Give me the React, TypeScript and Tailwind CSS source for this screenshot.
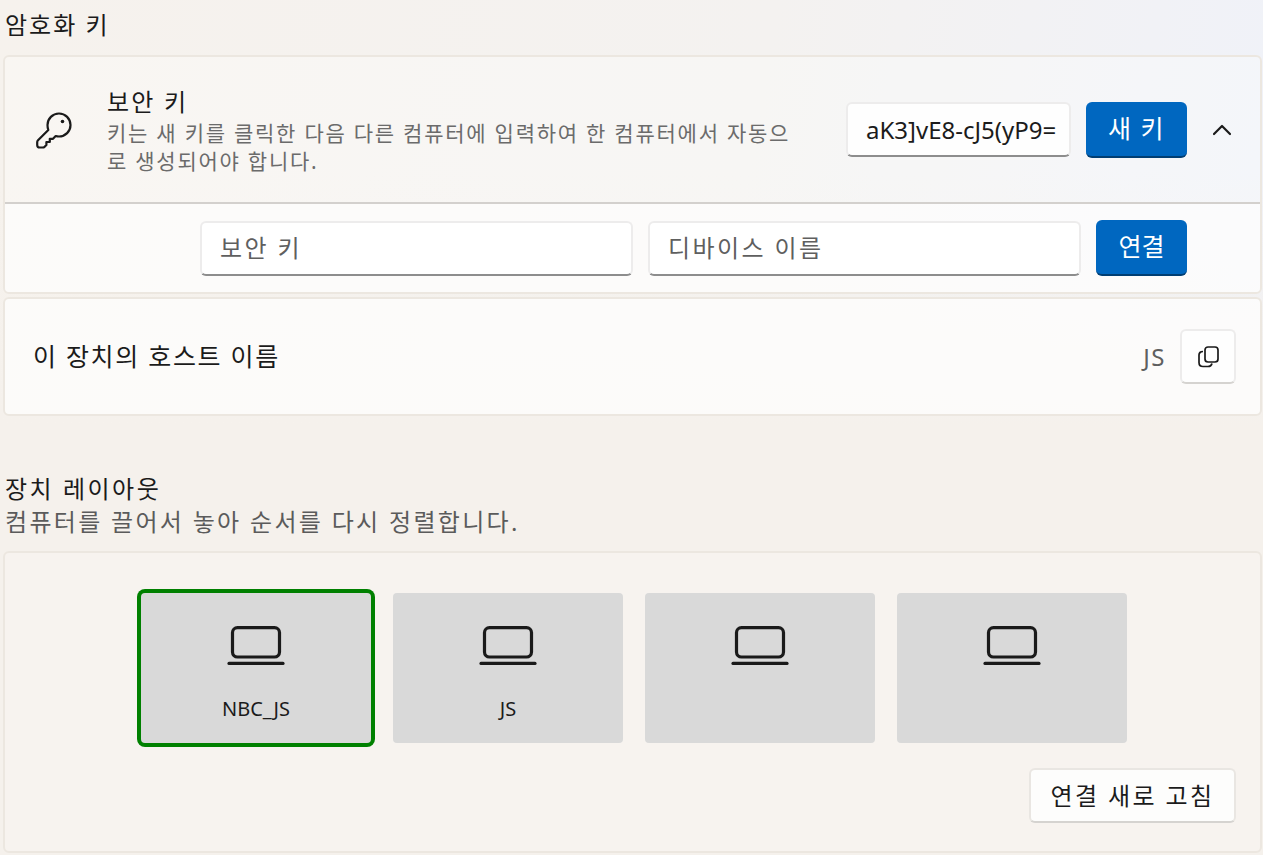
import React from "react";

const KeyIcon = () => (
  <svg width="38" height="38" viewBox="0 0 38 38" fill="none" stroke="#1a1a1a" strokeWidth="2.2" strokeLinejoin="round" strokeLinecap="round">
    <path d="M24 2.5a11.5 11.5 0 0 1 0 23c-1.400 0-2.400-.2-3.300-.5L18 27.800h-3.200v3.200h-3.400v3L9.600 35.800c-.6.5-1.200.7-2 .7H4.800c-1.500 0-2.600-1.100-2.600-2.600v-2.600c0-.8.3-1.500.8-2L13.300 18.900c-.5-1.200-.8-2.500-.8-4.900A11.500 11.500 0 0 1 24 2.500Z" />
    <circle cx="27.500" cy="10.500" r="1.800" fill="#1a1a1a" stroke="none" />
  </svg>
);

const LaptopIcon = () => (
  <svg width="58" height="40" viewBox="0 0 58 40" fill="none" stroke="#1a1a1a" strokeWidth="3.2" strokeLinecap="round">
    <rect x="5.500" y="1.600" width="47" height="29.400" rx="5" />
    <path d="M2 37.400h54" />
  </svg>
);

const CopyIcon = () => (
  <svg width="24" height="24" viewBox="0 0 24 24" fill="none" stroke="#1a1a1a" strokeWidth="1.700">
    <rect x="9" y="2" width="13" height="15" rx="3" />
    <path d="M7 6.500c-2.500 0-4 1.500-4 3.500v7.500c0 2.500 1.500 4 4 4h5c2 0 3.500-1 4-3" />
  </svg>
);

const Chevron = () => (
  <svg width="20" height="12" viewBox="0 0 20 12" fill="none" stroke="#1a1a1a" strokeWidth="2.200" strokeLinecap="round" strokeLinejoin="round">
    <path d="M2 10l8-8 8 8" />
  </svg>
);

const devices = ["NBC_JS", "JS", "", ""];

export default function App() {
  return (
    <div className="h-[855px] w-[1263px] overflow-hidden bg-[linear-gradient(100deg,#f6f2ed_0%,#f4f2f0_55%,#eff2fa_100%)] font-['Noto_Sans','Noto_Sans_CJK_KR',sans-serif] text-[#1b1b1b]">
      <div className="bg-[linear-gradient(180deg,transparent_0%,transparent_20%,#f5f1ec_50%)] h-full pl-[3px] pr-[1px]">
        <h2 className="pl-[2px] pt-[8px] text-[24px] leading-[34px] h-[55px] tracking-[2px]">암호화 키</h2>

        <div className="h-[239px] rounded-[6px] border-2 border-[#ece7e0] overflow-hidden flex flex-col">
          <div className="h-[147px] bg-white/30 border-b-2 border-[#d3d0cd] flex items-center pl-[30px] pr-[26px]">
            <KeyIcon />
            <div className="ml-[34px] w-[700px] whitespace-nowrap">
              <div className="text-[24px] leading-[34px] tracking-[2.200px]">보안 키</div>
              <div className="text-[21px] leading-[28px] tracking-[1.750px] text-[#6b6b6b]">
                키는 새 키를 클릭한 다음 다른 컴퓨터에 입력하여 한 컴퓨터에서 자동으
                <br />
                로 생성되어야 합니다.
              </div>
            </div>
            <div className="ml-[39px] flex items-center">
              <div className="w-[225px] h-[55px] bg-white/90 rounded-[6px] border-2 border-[#edecec] border-b-[#8d8d8d] text-[24px] pl-[18px] flex items-center whitespace-nowrap">
                aK3]vE8-cJ5(yP9=
              </div>
              <button className="ml-[15px] w-[101px] h-[56px] bg-[#0067c0] rounded-[6px] border-b-2 border-[#003e73] text-white text-[25px] tracking-[1.500px]">새 키</button>
              <div className="ml-[25px]"><Chevron /></div>
            </div>
          </div>
          <div className="flex-1 bg-white/70 flex items-center justify-end pr-[73px] gap-[15px]">
            <div className="w-[433px] h-[55px] bg-white rounded-[6px] border-2 border-[#edecec] border-b-[#8d8d8d] text-[24px] tracking-[2.400px] text-[#5f5f5f] pl-[18px] flex items-center">보안 키</div>
            <div className="w-[433px] h-[55px] bg-white rounded-[6px] border-2 border-[#edecec] border-b-[#8d8d8d] text-[24px] tracking-[2.400px] text-[#5f5f5f] pl-[18px] flex items-center">디바이스 이름</div>
            <button className="w-[91px] h-[56px] bg-[#0067c0] rounded-[6px] border-b-2 border-[#003e73] text-white text-[25px]">연결</button>
          </div>
        </div>

        <div className="mt-[3px] h-[119px] rounded-[6px] border-2 border-[#ece7e0] bg-white/70 flex items-center pl-[28px] pr-[24px]">
          <span className="text-[25px] tracking-[1.700px]">이 장치의 호스트 이름</span>
          <span className="ml-auto text-[24px] tracking-[1.500px] text-[#5f5f5f]">JS</span>
          <button className="ml-[14px] w-[56px] h-[55px] bg-white/80 rounded-[6px] border-2 border-[#edecec] border-b-[#d5d3d0] flex items-center justify-center"><CopyIcon /></button>
        </div>

        <div className="mt-[56px] pl-[2px]">
          <div className="text-[24px] leading-[34px] tracking-[2.500px]">장치 레이아웃</div>
          <div className="text-[24px] leading-[32px] tracking-[2.300px] text-[#5b5b5b]">컴퓨터를 끌어서 놓아 순서를 다시 정렬합니다.</div>
        </div>

        <div className="mt-[13px] h-[302px] rounded-[6px] border-2 border-[#ece7e0] bg-white/20 flex flex-col pt-[40px] pr-[24px]">
          <div className="flex gap-[22px] pl-[136px]">
            {devices.map((d, i) => (
              <div key={i} className={"w-[230px] h-[150px] bg-[#d9d9d9] rounded-[4px] flex flex-col items-center pt-[33px] " + (i === 0 ? "ring-4 ring-[#008000]" : "")}>
                <LaptopIcon />
                <div className="mt-[31px] text-[20px] leading-[24px]">{d}</div>
              </div>
            ))}
          </div>
          <button className="self-end mt-[25px] w-[207px] h-[55px] bg-white/80 rounded-[6px] border-2 border-[#e9e6e2] border-b-[#d5d3d0] text-[24px] tracking-[2.400px]">연결 새로 고침</button>
        </div>
      </div>
    </div>
  );
}
